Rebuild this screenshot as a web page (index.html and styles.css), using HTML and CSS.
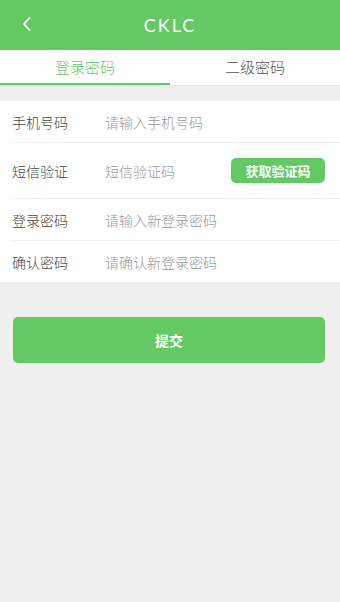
FILE: index.html
```html
<!DOCTYPE html>
<html lang="zh-CN">
<head>
  <meta charset="UTF-8" />
  <title>CKLC - 修改密码</title>
  <meta name="viewport" content="width=device-width, initial-scale=1.0" />
  <link rel="stylesheet" href="styles.css">
</head>
<body>

<div class="page">
  <!-- Header -->
  <div class="header">
    <span class="back">
      <svg width="10" height="16" viewBox="0 0 10 16"><path d="M8 1.5 L2 8 L8 14.5" fill="none" stroke="#fff" stroke-width="1.8" /></svg>
    </span>
    <span class="title">CKLC</span>
  </div>

  <!-- Tabs -->
  <div class="tabs">
    <div class="tab active">登录密码</div>
    <div class="tab">二级密码</div>
  </div>

  <!-- Form -->
  <div class="form">
    <div class="row">
      <label>手机号码</label>
      <input type="text" placeholder="请输入手机号码" />
    </div>
    <div class="row row-code">
      <label>短信验证</label>
      <input type="text" placeholder="短信验证码" />
      <button class="code-btn">获取验证码</button>
    </div>
    <div class="row">
      <label>登录密码</label>
      <input type="password" placeholder="请输入新登录密码" />
    </div>
    <div class="row">
      <label>确认密码</label>
      <input type="password" placeholder="请确认新登录密码" />
    </div>
  </div>

  <button class="submit">提交</button>
</div>

</body>
</html>
```

FILE: styles.css
```css
* { box-sizing: border-box; }
body {
  margin: 0;
  font-family: "Noto Sans CJK SC", "Noto Sans", sans-serif;
  font-weight: 300;
  background: #efefef;
}
.page {
  min-height: 602px;
}
.header {
  height: 50px;
  background: #64c865;
  display: flex;
  align-items: center;
  justify-content: center;
  position: relative;
}
.back {
  position: absolute;
  left: 22px;
  top: 16px;
  display: flex;
}
.title {
  color: #fff;
  font-family: "Lato", "Noto Sans", sans-serif;
  font-weight: 400;
  font-size: 18px;
  letter-spacing: 2px;
}
.tabs {
  display: flex;
  background: #fff;
  height: 36px;
  border-bottom: 1px solid #e3e3e3;
}
.tab {
  flex: 1;
  text-align: center;
  font-size: 15px;
  line-height: 34px;
  color: #555;
  border-bottom: 2px solid transparent;
}
.tab.active {
  color: #64c865;
  border-bottom-color: #64c865;
}
.form {
  margin-top: 15px;
  background: #fff;
}
.row {
  display: flex;
  align-items: center;
  height: 42px;
  margin-left: 12px;
  border-bottom: 1px solid #f0f0f0;
}
.row:last-child {
  border-bottom: none;
  height: 41px;
}
.row-code {
  height: 56px;
}
label {
  width: 93px;
  font-size: 14px;
  color: #444;
}
input {
  flex: 1;
  min-width: 0;
  border: none;
  outline: none;
  padding: 0;
  font-family: inherit;
  font-weight: inherit;
  font-size: 14px;
  color: #333;
}
input::placeholder {
  color: #999;
}
.code-btn {
  width: 94px;
  height: 25px;
  margin-right: 15px;
  background: #64c865;
  color: #fff;
  border: none;
  border-radius: 5px;
  font-family: inherit;
  font-size: 13px;
  font-weight: bold;
  padding: 0;
}
.submit {
  display: block;
  width: 312px;
  height: 46px;
  margin: 35px 0 0 13px;
  background: #64c865;
  color: #fff;
  border: none;
  border-radius: 5px;
  font-family: inherit;
  font-size: 14px;
  font-weight: bold;
}
```
